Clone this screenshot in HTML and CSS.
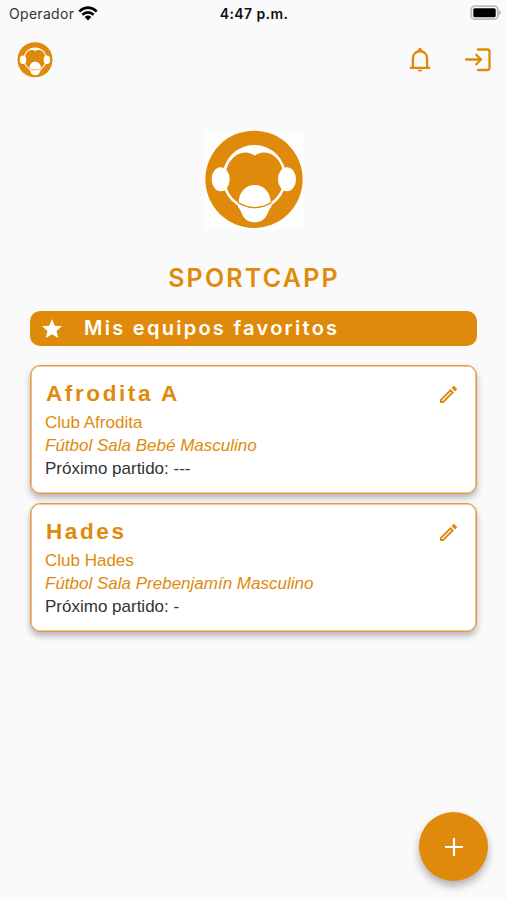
FILE: index.html
```html
<!DOCTYPE html>
<html lang="es">
<head>
<meta charset="utf-8">
<meta name="viewport" content="width=device-width, initial-scale=1">
<title>Sportcapp</title>
<link rel="stylesheet" href="styles.css">
</head>
<body>
<svg class="defs" aria-hidden="true">
  <symbol id="logo" viewBox="30 30 300 300">
    <circle class="fill" cx="180" cy="178" r="146"/>
    <ellipse class="white" cx="181" cy="173" rx="96" ry="98"/>
    <path class="fill" d="M182 107C196 95 222 92 243 110C262 126 270 152 268 180C266 220 238 257 181 265C124 257 96 220 94 180C92 152 102 126 121 110C142 92 168 95 182 107Z"/>
    <ellipse class="white" cx="80" cy="178" rx="27" ry="36"/>
    <ellipse class="white" cx="279" cy="178" rx="27" ry="36"/>
    <path class="white" d="M134 249C134 216 155 195 182 195S230 216 230 249C216 258 202 262 182 263S146 258 134 249Z"/>
    <path class="white" d="M132 252Q182 284 232 252V261C227 264 224 274 219 284C206 314 157 314 145 284C140 274 137 264 132 261Z"/>
    <path class="line" d="M132 248Q182 278 232 248"/>
  </symbol>
  <symbol id="pencil" viewBox="3 3 18 18"><path d="M14.06 9.02l.92.92L5.92 19H5v-.92l9.06-9.06M17.66 3c-.25 0-.51.1-.7.29l-1.83 1.83 3.75 3.75 1.83-1.83c.39-.39.39-1.02 0-1.41l-2.34-2.34c-.2-.2-.45-.29-.71-.29zm-3.6 3.19L3 17.25V21h3.75L17.81 9.94l-3.75-3.75z"/></symbol>
</svg>
<div class="status">
  <div class="carrier">Operador
    <svg class="wifi" viewBox="0 0 20 15"><path d="M1.3 5.5Q10-2.1 18.7 5.5M4.3 8.8Q10 4 15.7 8.8"/><path class="dot" d="M6.6 11Q10 8.2 13.4 11L10 14.5Z"/></svg>
  </div>
  <div class="time">4:47 p.m.</div>
  <svg class="battery" viewBox="0 0 32 16"><rect class="shell" x="1.2" y="1.2" width="26.6" height="13" rx="3.5"/><rect x="3.3" y="3.2" width="22.4" height="9" rx="1.5"/><path class="tip" d="M28.500 4.500q5 3.200 0 6.400Z"/></svg>
</div>
<header class="bar">
  <svg class="mark"><use href="#logo"/></svg>
  <div class="actions">
    <svg class="icon" viewBox="0 0 24 24"><path d="M12 22c1.100 0 2-.7 2-1.600h-4c0 .9.900 1.600 2 1.600z"/><path class="bell" d="M3.300 18.800H20.700M5.900 18.500V10.500C5.900 7 8.500 4.500 12 4.500S18.100 7 18.100 10.500V18.500"/><path d="M10.400 4.200V3.200a1.600 1.600 0 0 1 3.200 0v1z"/></svg>
    <svg class="login" viewBox="0 0 26 24"><path d="M1 11.500H16M11.300 6.800L16 11.500L11.300 16.200M13 1.500H22.300Q24.500 1.500 24.500 3.700V19.800Q24.500 22 22.300 22H13"/></svg>
  </div>
</header>
<main>
  <div class="hero"><svg class="picture"><use href="#logo"/></svg></div>
  <h1>SPORTCAPP</h1>
  <h2>
    <svg class="star" viewBox="2 2 20 19"><path d="M12 17.270L18.180 21l-1.640-7.030L22 9.240l-7.190-.61L12 2 9.190 8.630 2 9.240l5.460 4.730L5.820 21z"/></svg>
    <span>Mis equipos favoritos</span>
  </h2>
  <article class="card">
    <div class="card-top"><h3>Afrodita A</h3><svg class="edit"><use href="#pencil"/></svg></div>
    <p>Club Afrodita</p>
    <p class="category">Fútbol Sala Bebé Masculino</p>
    <p class="next">Próximo partido: ---</p>
  </article>
  <article class="card">
    <div class="card-top"><h3>Hades</h3><svg class="edit"><use href="#pencil"/></svg></div>
    <p>Club Hades</p>
    <p class="category">Fútbol Sala Prebenjamín Masculino</p>
    <p class="next">Próximo partido: -</p>
  </article>
</main>
<button class="fab" aria-label="Añadir"><svg viewBox="0 0 18 18"><path d="M9 0V18M0 9H18"/></svg></button>
</body>
</html>
```
FILE: styles.css
```css
* { box-sizing: border-box; }
:root { --orange: #e08a0b; }
body {
  margin: 0;
  height: 900px;
  overflow: hidden;
  background: #fafafa;
  color: var(--orange);
  font-family: "Liberation Sans", sans-serif;
}
svg { display: block; fill: currentColor; }
.defs { position: absolute; width: 0; height: 0; }
.white { fill: #fff; }
.fill { fill: #e08a0b; }
.line { fill: none; stroke: #e08a0b; stroke-width: 4; }

.status {
  display: grid;
  grid-template-columns: 1fr auto 1fr;
  align-items: center;
  height: 28px;
  padding: 0 8px 0 9px;
  color: #111;
  font: 14px/28px Inter, sans-serif;
}
.carrier { display: flex; gap: 4px; align-items: center; color: #333; letter-spacing: .3px; }
.wifi { width: 20px; height: 15px; fill: none; stroke: #000; stroke-width: 2.6; margin-top: -2px; }
.wifi .dot { fill: #000; stroke: none; }
.time { font-weight: 600; letter-spacing: .4px; }
.battery { width: 32px; height: 16px; justify-self: end; margin: -2px -3px 0 0; fill: #000; }
.battery .shell { fill: #fafafa; stroke: #bcbcbc; stroke-width: 1.8; }
.battery .tip { fill: #bcbcbc; }

.bar {
  display: flex;
  justify-content: space-between;
  align-items: center;
  height: 64px;
  padding: 0 16px 0 17px;
}
.mark { width: 36px; height: 36px; }
.actions { display: flex; gap: 31px; align-items: center; }
.icon { width: 28px; height: 28px; }
.bell { fill: none; stroke: currentColor; stroke-width: 2; }
.login { width: 26px; height: 24px; fill: none; stroke: currentColor; stroke-width: 2.3; stroke-linecap: round; stroke-linejoin: round; }

main { padding: 38px 30px 0; }
.hero { display: flex; justify-content: center; }
.picture { width: 100px; height: 100px; border-radius: 4px; background: #fdfdfd; }
h1, h2, h3, p { margin: 0; }
h1 {
  margin-top: 30px;
  padding-left: 1px;
  text-align: center;
  font: 600 25px/36px Inter, sans-serif;
  letter-spacing: 2.2px;
}
h2 {
  display: flex;
  align-items: center;
  height: 35px;
  margin: 15px 0 19px;
  padding-left: 12px;
  gap: 22px;
  border-radius: 10px;
  background: var(--orange);
  color: #fff;
  font: 600 20px/32px Inter, sans-serif;
  letter-spacing: 2.27px;
}
h2 span { margin-top: -2px; }
.star { width: 20px; height: 19px; }
.card {
  height: 129px;
  margin-bottom: 9px;
  padding: 12px 19px 0 14px;
  border: 1px solid #e29a3c;
  border-radius: 10px;
  background: #fff;
  box-shadow: inset 0 0 0 .6px #e29a3c, 0 4px 6px rgba(40, 40, 60, .32);
}
.card-top { display: flex; justify-content: space-between; height: 32px; padding-left: 1px; }
h3 { font: bold 22.5px/32px "Liberation Sans", sans-serif; letter-spacing: 2.6px; }
.edit { width: 17px; height: 17px; margin-top: 8px; }
.card p { font-size: 17px; line-height: 23px; white-space: nowrap; padding-top: 1px; height: 23px; }
.card .category { font-style: italic; }
.card .next { color: #333; }

.fab {
  position: absolute;
  left: 419px;
  top: 812px;
  display: grid;
  place-items: center;
  width: 69px;
  height: 69px;
  padding: 0;
  border: 0;
  border-radius: 50%;
  background: var(--orange);
  box-shadow: 0 5px 9px rgba(0, 0, 0, .3);
}
.fab svg { width: 18px; height: 18px; stroke: #fff; stroke-width: 2.2; }
```
